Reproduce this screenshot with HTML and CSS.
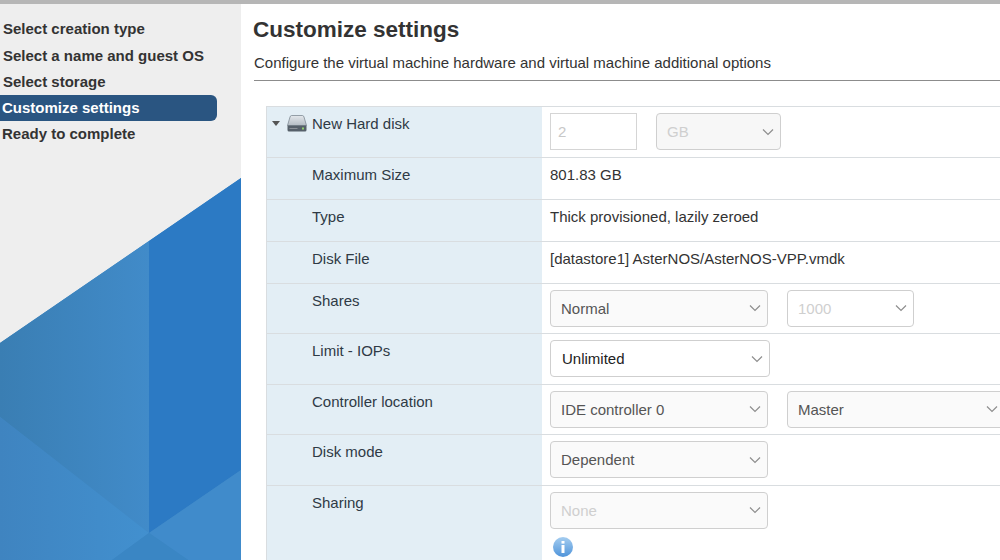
FILE: index.html
```html
<!DOCTYPE html>
<html lang="en">
<head>
  <meta charset="UTF-8">
  <meta name="viewport" content="width=device-width, initial-scale=1">
  <title>Customize settings</title>
  <link rel="stylesheet" href="styles.css">
</head>
<body>
  <svg class="icon-defs" width="0" height="0">
    <symbol id="chevron" viewBox="0 0 12 8">
      <path d="M1 1.5 L6 6.5 L11 1.5" fill="none" stroke="#8e8e8e" stroke-width="1.2"/>
    </symbol>
  </svg>

  <div class="wizard">
    <aside class="sidebar">
      <!-- background shapes -->
      <svg class="sidebar-art" viewBox="0 0 241 560" width="241" height="560">
        <defs>
          <linearGradient id="midFade" x1="0" x2="1" y1="0" y2="0">
            <stop offset="0" stop-color="#3a7eb3"/>
            <stop offset="1" stop-color="#418bc9"/>
          </linearGradient>
          <linearGradient id="lowFade" x1="0" x2="1" y1="0" y2="0">
            <stop offset="0" stop-color="#3f84c0"/>
            <stop offset="1" stop-color="#4290cf"/>
          </linearGradient>
        </defs>
        <polygon points="0,343 241,178 241,560 0,560" fill="#3d86c4"/>
        <polygon points="0,343 149,241 149,533 0,417" fill="url(#midFade)"/>
        <polygon points="149,241 241,178 241,470 149,533" fill="#2c7ac4"/>
        <polygon points="0,417 149,533 112,560 0,560" fill="url(#lowFade)"/>
        <polygon points="149,533 241,470 241,560 188,560" fill="#408bcb"/>
        <polygon points="149,533 112,560 188,560" fill="#3a86c4"/>
      </svg>
      <ul class="steps">
        <li class="done first">Select creation type</li>
        <li class="done">Select a name and guest OS</li>
        <li class="done">Select storage</li>
        <li class="active">Customize settings</li>
        <li>Ready to complete</li>
      </ul>
    </aside>

    <main class="content">
      <h1>Customize settings</h1>
      <p class="subtitle">Configure the virtual machine hardware and virtual machine additional options</p>

      <div class="settings">
        <div class="row form-row">
          <div class="label">
            <span class="caret"></span>
            <svg class="disk" viewBox="0 0 20 17" width="20" height="17">
              <defs>
                <linearGradient id="diskTop" x1="0" x2="0" y1="0" y2="1">
                  <stop offset="0" stop-color="#e4e8ec"/>
                  <stop offset="1" stop-color="#b4bcc4"/>
                </linearGradient>
              </defs>
              <path d="M4.5 0.5 H15.5 Q16.5 0.5 17 2 L19.5 10.5 H0.5 L3 2 Q3.5 0.5 4.5 0.5 Z" fill="url(#diskTop)" stroke="#7f8a94" stroke-width="0.8"/>
              <path d="M0.5 10.5 H19.5 V15 Q19.5 16.5 18 16.5 H2 Q0.5 16.5 0.5 15 Z" fill="#56606a"/>
              <rect x="15" y="12.5" width="2" height="2" fill="#8fd06f"/>
              <rect x="2.5" y="13" width="8" height="1" fill="#8a9097"/>
            </svg>
            <span>New Hard disk</span>
          </div>
          <div class="value">
            <div class="field size-input">2</div>
            <div class="select off gb"><span>GB</span><svg class="chev"><use href="#chevron"/></svg></div>
          </div>
        </div>

        <div class="row text-row">
          <div class="label indent">Maximum Size</div>
          <div class="value">801.83 GB</div>
        </div>
        <div class="row text-row">
          <div class="label indent">Type</div>
          <div class="value">Thick provisioned, lazily zeroed</div>
        </div>
        <div class="row text-row">
          <div class="label indent">Disk File</div>
          <div class="value">[datastore1] AsterNOS/AsterNOS-VPP.vmdk</div>
        </div>

        <div class="row form-row">
          <div class="label indent">Shares</div>
          <div class="value">
            <div class="select wide"><span>Normal</span><svg class="chev"><use href="#chevron"/></svg></div>
            <div class="select off amount"><span>1000</span><svg class="chev"><use href="#chevron"/></svg></div>
          </div>
        </div>
        <div class="row form-row">
          <div class="label indent">Limit - IOPs</div>
          <div class="value">
            <div class="select active-select"><span>Unlimited</span><svg class="chev"><use href="#chevron"/></svg></div>
          </div>
        </div>
        <div class="row form-row">
          <div class="label indent">Controller location</div>
          <div class="value">
            <div class="select wide"><span>IDE controller 0</span><svg class="chev"><use href="#chevron"/></svg></div>
            <div class="select wide"><span>Master</span><svg class="chev"><use href="#chevron"/></svg></div>
          </div>
        </div>
        <div class="row form-row">
          <div class="label indent">Disk mode</div>
          <div class="value">
            <div class="select wide"><span>Dependent</span><svg class="chev"><use href="#chevron"/></svg></div>
          </div>
        </div>
        <div class="row form-row last">
          <div class="label indent">Sharing</div>
          <div class="value stacked">
            <div class="select off wide"><span>None</span><svg class="chev"><use href="#chevron"/></svg></div>
            <svg class="info" viewBox="0 0 20 20" width="20" height="20">
              <defs>
                <linearGradient id="infoFill" x1="0" x2="0" y1="0" y2="1">
                  <stop offset="0" stop-color="#a5cdf0"/>
                  <stop offset="1" stop-color="#4f94da"/>
                </linearGradient>
              </defs>
              <circle cx="10" cy="10" r="10" fill="url(#infoFill)"/>
              <rect x="8.5" y="4" width="3" height="2.6" fill="#fff"/>
              <rect x="8.5" y="8" width="3" height="8" fill="#fff"/>
            </svg>
          </div>
        </div>
      </div>
    </main>
  </div>
</body>
</html>
```
FILE: styles.css
```css
html, body {
  margin: 0;
  height: 100%;
  overflow: hidden;
}

body {
  font-family: "Liberation Sans", Arial, sans-serif;
  font-size: 15px;
  color: #333;
  background: #fff;
}

.icon-defs {
  display: block;
}

.wizard {
  display: flex;
  height: 556px;
  border-top: 4px solid #b6b6b6;
}

/* left column */
.sidebar {
  position: relative;
  flex: 0 0 241px;
  background: #eee;
  overflow: hidden;
}

.sidebar-art {
  position: absolute;
  left: 0;
  top: -4px;
}

.steps {
  position: relative;
  list-style: none;
  margin: 0;
  padding: 12px 0 0;
}

.steps li {
  width: 215px;
  height: 26px;
  line-height: 26px;
  padding-left: 2px;
  font-weight: bold;
  white-space: nowrap;
}

.steps li.done {
  width: 214px;
  padding-left: 3px;
}

.steps li.first {
  height: 27px;
}

.steps li.active {
  background: #2a5581;
  color: #fff;
  border-radius: 0 6px 6px 0;
}

/* right column */
.content {
  flex: 1;
  min-width: 0;
  padding-left: 13px;
}

h1 {
  margin: 0 0 0 -1px;
  padding-top: 13px;
  font-size: 22.5px;
  line-height: 26px;
  font-weight: bold;
  color: #333;
}

.subtitle {
  margin: 0;
  padding: 11px 0 8px;
  line-height: 18px;
  border-bottom: 1px solid #8c8c8c;
}

.settings {
  margin: 25px 0 0 12px;
  border-left: 1px solid #d9dde0;
}

.row {
  display: grid;
  grid-template-columns: 275px 1fr;
  border-top: 1px solid #d9dde0;
  box-sizing: border-box;
}

.form-row {
  height: 50.5px;
}

.text-row {
  height: 42px;
}

.form-row.last {
  height: 75px;
}

.label {
  display: flex;
  align-items: flex-start;
  background: #e3eef5;
  color: #2f3a45;
  padding-top: 8px;
  line-height: 18px;
}

.label.indent {
  padding-left: 45px;
}

.caret {
  margin: 6px 0 0 5px;
  border-left: 4.5px solid transparent;
  border-right: 4.5px solid transparent;
  border-top: 5px solid #555;
}

.disk {
  margin: 0 5px 0 7px;
}

.value {
  display: flex;
  gap: 19px;
  padding: 6px 0 0 8px;
  white-space: nowrap;
}

.text-row .value {
  padding-top: 8px;
  line-height: 18px;
}

.value.stacked {
  flex-direction: column;
  gap: 8px;
}

.field,
.select {
  box-sizing: border-box;
  flex: none;
  height: 37px;
  line-height: 35px;
  color: #555;
}

.field {
  width: 87px;
  padding-left: 7px;
  border: 1px solid #d5d5d5;
  color: #c8c8c8;
}

.select {
  display: flex;
  justify-content: space-between;
  align-items: center;
  padding: 0 6px 0 10px;
  background: #fafafa;
  border: 1px solid #cfcfcf;
  border-radius: 4px;
}

.select.off {
  color: #cfcfcf;
}

.select.gb {
  width: 125px;
  background: #f7f7f7;
}

.select.wide {
  width: 218px;
}

.select.amount {
  width: 127px;
  background: #fff;
}

.select.active-select {
  width: 220px;
  padding-left: 11px;
  background: #fff;
  color: #222;
}

.chev {
  width: 12px;
  height: 8px;
}

.info {
  margin-left: 3px;
}
```
